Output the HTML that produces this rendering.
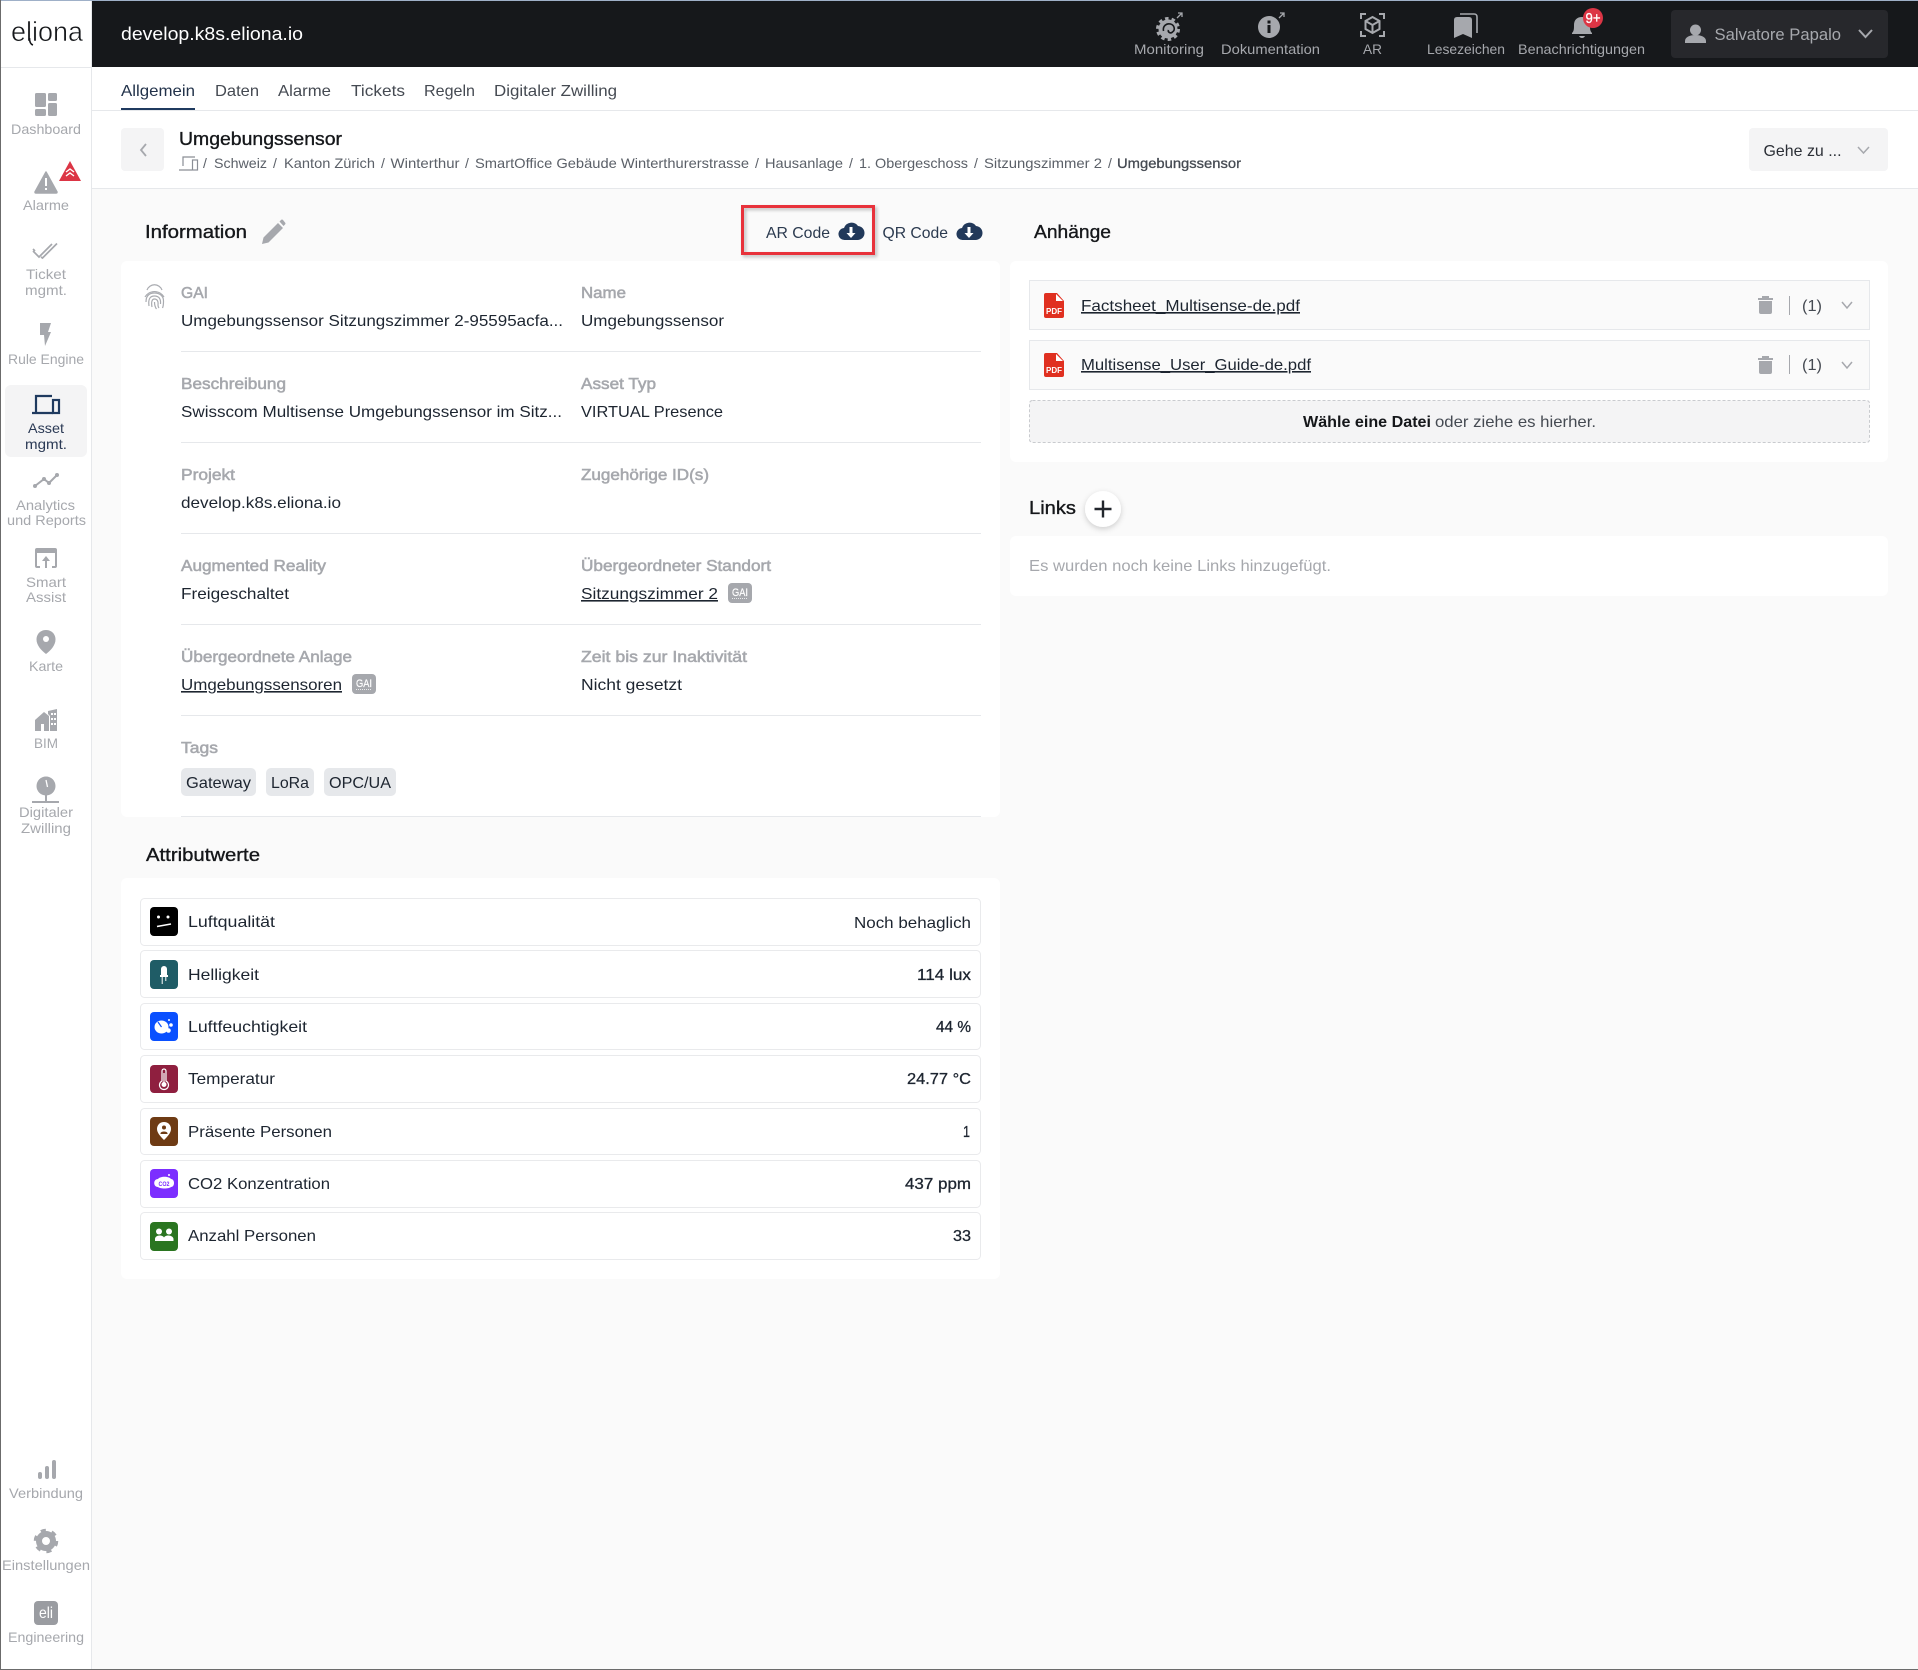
<!DOCTYPE html>
<html lang="de"><head><meta charset="utf-8"><title>Umgebungssensor</title>
<style>
html,body{margin:0;padding:0;width:1918px;height:1670px;overflow:hidden;background:#fafafa}
svg{display:block;position:absolute;left:0;top:0}
text{font-family:"Liberation Sans",Arial,sans-serif;font-size:16px;fill:#1d2530;white-space:pre}
.m{stroke:#1d2530;stroke-width:.3px}
.s text,text.s{font-size:14px;fill:#a6a8ad}
.h{font-size:18px;fill:#15171a;stroke:#15171a;stroke-width:.35px}
.l{fill:#a6a8ad;stroke:#a6a8ad;stroke-width:.55px}
.bc{font-size:14px;fill:#5b6068}
.t{fill:#454a52}
.ico{fill:#a6a8ad}
</style></head><body>
<svg width="1918" height="1670" viewBox="0 0 1918 1670" xmlns="http://www.w3.org/2000/svg">
<defs><filter id="sh" x="-40%" y="-40%" width="180%" height="190%"><feDropShadow dx="0" dy="2" stdDeviation="3" flood-color="#000" flood-opacity=".18"/></filter>
<filter id="sh2" x="-10%" y="-10%" width="125%" height="130%"><feDropShadow dx="2" dy="2" stdDeviation="1.5" flood-color="#000" flood-opacity=".25"/></filter></defs>
<rect width="1918" height="1670" fill="#fafafa"/>

<!-- sidebar -->
<rect x="0" y="0" width="92" height="1670" fill="#fff"/>
<rect x="91" y="0" width="1" height="1670" fill="#e6e8eb"/>
<rect x="0" y="67" width="92" height="1" fill="#e6e8eb"/>
<text x="11" y="41" textLength="72" lengthAdjust="spacingAndGlyphs" style="font-size:28px;fill:#15171a;stroke:#fff;stroke-width:.55px">eliona</text>
<path d="M29.500 38q0 6 3.500 7" fill="none" stroke="#15171a" stroke-width="1.600"/>

<!-- header -->
<rect x="92" y="0" width="1826" height="67" fill="#16181b"/>
<text x="121" y="40" textLength="182" lengthAdjust="spacingAndGlyphs" style="font-size:18px;fill:#fff">develop.k8s.eliona.io</text>

<g class="s">
<text x="1134" y="54" textLength="70" lengthAdjust="spacingAndGlyphs">Monitoring</text>
<text x="1221" y="54" textLength="99" lengthAdjust="spacingAndGlyphs">Dokumentation</text>
<text x="1363" y="54" textLength="19" lengthAdjust="spacingAndGlyphs">AR</text>
<text x="1427" y="54" textLength="78" lengthAdjust="spacingAndGlyphs">Lesezeichen</text>
<text x="1518" y="54" textLength="127" lengthAdjust="spacingAndGlyphs">Benachrichtigungen</text>
</g>
<!-- monitoring icon -->
<g>
<circle cx="1168" cy="29" r="9.500" fill="#a6a8ad"/>
<circle cx="1168" cy="29" r="10.500" fill="none" stroke="#a6a8ad" stroke-width="3" stroke-dasharray="3.500 3.100"/>
<path d="M1163.500 31c-1-5 3-8 7-7 4 1 5 6 2 8-2 2-5 0-4-2" fill="none" stroke="#16181b" stroke-width="1.600"/>
<path d="M1177 18l5-5m-4 0h4v4" fill="none" stroke="#a6a8ad" stroke-width="1.300"/>
</g>
<!-- info -->
<circle cx="1269" cy="27" r="11" fill="#a6a8ad"/>
<rect x="1267.500" y="25" width="3" height="8" fill="#16181b"/><rect x="1267.500" y="20.500" width="3" height="3" fill="#16181b"/>
<path d="M1279 18l5-5m-4 0h4v4" fill="none" stroke="#a6a8ad" stroke-width="1.300"/>
<!-- AR -->
<g fill="none" stroke="#a6a8ad" stroke-width="2">
<path d="M1361 19v-5h5M1379 14h5v5M1384 31v5h-5M1366 36h-5v-5"/>
<path d="M1372.500 17l7 4v8l-7 4-7-4v-8zM1365.500 21l7 4 7-4M1372.500 25v8"/>
</g>
<!-- bookmark -->
<path d="M1454 20q0-3 3-3h12q3 0 3 3v18l-9-4-9 4z" fill="#a6a8ad"/>
<path d="M1460 14h14q3 0 3 3v16" fill="none" stroke="#a6a8ad" stroke-width="1.600"/>
<!-- bell -->
<path d="M1572 33c2-2 2-4 2-8 0-5 3-8 8-8s8 3 8 8c0 4 0 6 2 8v1h-20z" fill="#a6a8ad"/><path d="M1579 36h6q-1 2-3 2t-3-2z" fill="#a6a8ad"/>
<circle cx="1593" cy="18" r="10" fill="#dc3545"/>
<text x="1585.500" y="23" textLength="15" lengthAdjust="spacingAndGlyphs" style="font-size:15px;fill:#fff;stroke:#fff;stroke-width:.3px">9+</text>
<!-- user -->
<rect x="1671" y="10" width="217" height="48" rx="4" fill="#27282c"/>
<circle cx="1695.500" cy="30" r="5.500" fill="#a6a8ad"/><path d="M1685 43v-2c0-4 5-6 10.500-6s10.500 2 10.500 6v2z" fill="#a6a8ad"/>
<text x="1714.500" y="40" textLength="126.500" lengthAdjust="spacingAndGlyphs" style="font-size:17px;fill:#a6a8ad">Salvatore Papalo</text>
<path d="M1859 30l6.500 7 6.500-7" fill="none" stroke="#a6a8ad" stroke-width="2"/>

<!-- tabs -->
<rect x="92" y="67" width="1826" height="121" fill="#fff"/>
<rect x="92" y="110" width="1826" height="1" fill="#e6e8eb"/>
<rect x="92" y="188" width="1826" height="1" fill="#e6e8eb"/>
<rect x="121" y="108" width="74" height="2" fill="#1f3a5f"/>
<g>
<text class="t" x="121" y="96" textLength="74" lengthAdjust="spacingAndGlyphs" style="fill:#22324a">Allgemein</text>
<text class="t" x="215" y="96" textLength="44" lengthAdjust="spacingAndGlyphs">Daten</text>
<text class="t" x="278" y="96" textLength="53" lengthAdjust="spacingAndGlyphs">Alarme</text>
<text class="t" x="351" y="96" textLength="54" lengthAdjust="spacingAndGlyphs">Tickets</text>
<text class="t" x="424" y="96" textLength="51" lengthAdjust="spacingAndGlyphs">Regeln</text>
<text class="t" x="494" y="96" textLength="123" lengthAdjust="spacingAndGlyphs">Digitaler Zwilling</text>
</g>

<!-- breadcrumb -->
<rect x="121" y="128" width="43" height="43" rx="4" fill="#f4f4f5"/>
<path d="M146 144l-5 6 5 6" fill="none" stroke="#a6a8ad" stroke-width="1.800"/>
<text class="h" x="179" y="145" textLength="163" lengthAdjust="spacingAndGlyphs">Umgebungssensor</text>
<g fill="none" stroke="#8a8e95" stroke-width="1.200"><path d="M183 166v-9h12M179 170h13"/><rect x="192.500" y="160" width="5" height="10"/></g>
<g class="bc">
<text class="bc" x="203" y="168">/</text>
<text class="bc" x="214" y="168" textLength="53" lengthAdjust="spacingAndGlyphs">Schweiz</text>
<text class="bc" x="273" y="168">/</text>
<text class="bc" x="284" y="168" textLength="91" lengthAdjust="spacingAndGlyphs">Kanton Zürich</text>
<text class="bc" x="381" y="168">/</text>
<text class="bc" x="390.500" y="168" textLength="69" lengthAdjust="spacingAndGlyphs">Winterthur</text>
<text class="bc" x="465" y="168">/</text>
<text class="bc" x="475" y="168" textLength="274" lengthAdjust="spacingAndGlyphs">SmartOffice Gebäude Winterthurerstrasse</text>
<text class="bc" x="755" y="168">/</text>
<text class="bc" x="765" y="168" textLength="78" lengthAdjust="spacingAndGlyphs">Hausanlage</text>
<text class="bc" x="849" y="168">/</text>
<text class="bc" x="859" y="168" textLength="109" lengthAdjust="spacingAndGlyphs">1. Obergeschoss</text>
<text class="bc" x="974" y="168">/</text>
<text class="bc" x="984" y="168" textLength="118" lengthAdjust="spacingAndGlyphs">Sitzungszimmer 2</text>
<text class="bc" x="1108" y="168">/</text>
<text class="bc" x="1117" y="168" textLength="124" lengthAdjust="spacingAndGlyphs" style="fill:#454a52;stroke:#454a52;stroke-width:.3px">Umgebungssensor</text>
</g>
<rect x="1749" y="128" width="139" height="43" rx="4" fill="#f4f4f5"/>
<text x="1763.500" y="156" textLength="78" lengthAdjust="spacingAndGlyphs" style="fill:#2b2f36">Gehe zu ...</text>
<path d="M1858 147l5.500 6 5.500-6" fill="none" stroke="#a6a8ad" stroke-width="1.500"/>

<!-- sidebar items -->
<rect x="5" y="385" width="82" height="72" rx="6" fill="#f4f4f5"/>
<g class="ico">
<rect x="35" y="93" width="11" height="14" rx="1.500"/><rect x="48" y="93" width="9" height="8" rx="1.500"/><rect x="35" y="109" width="11" height="7" rx="1.500"/><rect x="48" y="103" width="9" height="13" rx="1.500"/>
<path d="M46 172l11 20q0 1-1 1H36q-1 0-1-1z" stroke="#a6a8ad" stroke-width="1.500" stroke-linejoin="round"/>
<path d="M33 251l6 6 13-13M41 257l1.500 1L57 243.500" fill="none" stroke="#a6a8ad" stroke-width="1.700"/>
<path d="M33 249l2 2" fill="none" stroke="#a6a8ad" stroke-width="1.700"/>
<path d="M40 323h11l-3 9h3l-6 14-1-11h-4z"/>
<circle cx="35" cy="486" r="2"/><circle cx="44" cy="479" r="2"/><circle cx="49" cy="483" r="2"/><circle cx="57" cy="475" r="2"/>
<path d="M35 486l9-7 5 4 8-8" fill="none" stroke="#a6a8ad" stroke-width="2"/>
<path d="M37 548h18a2 2 0 0 1 2 2v16a2 2 0 0 1-2 2h-3v-2h3v-13H37v13h3v2h-3a2 2 0 0 1-2-2v-16a2 2 0 0 1 2-2zM46 556l4 5h-3v7h-2v-7h-3z"/>
<path d="M46 630c5.500 0 9.500 4 9.500 9.500 0 6-5 11-9.500 14.500-4.500-3.500-9.500-8.500-9.500-14.500C36.500 634 40.500 630 46 630z"/>
<path d="M35 720l9-8 5 4v15h-5v-7h-3v7h-6zM48 711l9-2v22h-7v-15l-2-2z"/>
<circle cx="46" cy="786" r="9.500"/>
<rect x="32" y="801" width="27" height="2"/><rect x="45" y="795" width="2" height="7"/>
<rect x="38" y="1472" width="4" height="7" rx="2"/><rect x="45" y="1466" width="4" height="13" rx="2"/><rect x="52" y="1460" width="4" height="19" rx="2"/>
<rect x="34" y="1601" width="24" height="24" rx="4" fill="#9a9ca1"/>
</g>
<circle cx="46" cy="639" r="3" fill="#fff"/>
<g fill="#fff"><rect x="51" y="713" width="2" height="2"/><rect x="54" y="713" width="2" height="2"/><rect x="51" y="718" width="2" height="2"/><rect x="54" y="718" width="2" height="2"/><rect x="51" y="723" width="2" height="2"/><rect x="54" y="723" width="2" height="2"/></g>
<rect x="45" y="178" width="2" height="8" fill="#fff"/><rect x="45" y="188" width="2" height="2" fill="#fff"/>
<path d="M46 780l1.500 7" stroke="#fff" stroke-width="1.300"/>
<path d="M70 161l11 20H59z" fill="#dc3545"/>
<path d="M66 172l4-3 4 3M66 176l4-3 4 3" stroke="#fff" stroke-width="1.400" fill="none"/>
<g stroke="#1f3a5f" fill="none" stroke-width="2.200"><path d="M36 412v-16h16M32 413h21"/><rect x="53" y="400" width="6" height="13"/></g>
<circle cx="46" cy="1541" r="7" fill="none" stroke="#a6a8ad" stroke-width="6"/>
<circle cx="46" cy="1541" r="10.500" fill="none" stroke="#a6a8ad" stroke-width="3.500" stroke-dasharray="5 6"/>
<text x="39" y="1618" textLength="14" lengthAdjust="spacingAndGlyphs" style="font-size:16px;fill:#fff">eli</text>
<g class="s">
<text x="11" y="134" textLength="70" lengthAdjust="spacingAndGlyphs">Dashboard</text>
<text x="23" y="210" textLength="46" lengthAdjust="spacingAndGlyphs">Alarme</text>
<text x="26" y="279" textLength="40" lengthAdjust="spacingAndGlyphs">Ticket</text>
<text x="25" y="295" textLength="42" lengthAdjust="spacingAndGlyphs">mgmt.</text>
<text x="8" y="364" textLength="76" lengthAdjust="spacingAndGlyphs">Rule Engine</text>
<text x="28" y="433" textLength="36" lengthAdjust="spacingAndGlyphs" style="fill:#2b3a55">Asset</text>
<text x="25" y="449" textLength="42" lengthAdjust="spacingAndGlyphs" style="fill:#2b3a55">mgmt.</text>
<text x="16" y="510" textLength="59" lengthAdjust="spacingAndGlyphs">Analytics</text>
<text x="7" y="525" textLength="79" lengthAdjust="spacingAndGlyphs">und Reports</text>
<text x="26" y="587" textLength="40" lengthAdjust="spacingAndGlyphs">Smart</text>
<text x="26" y="602" textLength="40" lengthAdjust="spacingAndGlyphs">Assist</text>
<text x="29" y="671" textLength="34" lengthAdjust="spacingAndGlyphs">Karte</text>
<text x="34" y="748" textLength="24" lengthAdjust="spacingAndGlyphs">BIM</text>
<text x="19" y="817" textLength="54" lengthAdjust="spacingAndGlyphs">Digitaler</text>
<text x="21" y="833" textLength="50" lengthAdjust="spacingAndGlyphs">Zwilling</text>
<text x="9" y="1498" textLength="74" lengthAdjust="spacingAndGlyphs">Verbindung</text>
<text x="2" y="1570" textLength="88" lengthAdjust="spacingAndGlyphs">Einstellungen</text>
<text x="8" y="1642" textLength="76" lengthAdjust="spacingAndGlyphs">Engineering</text>
</g>

<!-- information heading -->
<text class="h" x="145" y="238" textLength="102" lengthAdjust="spacingAndGlyphs">Information</text>
<path d="M262 244l1.500-6.500L278 223l5 5-14.500 14.500zM279.500 221.500l1.500-1.500q1-1 2 0l2 2.500q1 1 0 2l-1.500 1.500z" fill="#a6a8ad"/>
<text x="766" y="238" textLength="64" lengthAdjust="spacingAndGlyphs" style="fill:#2b3a4f">AR Code</text>
<path d="M845 240a6 6 0 0 1-1-12 8 8 0 0 1 14-2 7 7 0 0 1-1 14z" fill="#22395a"/><path d="M849.500 227h3v6h3l-4.500 5-4.500-5h3z" fill="#fff"/>
<text x="882.500" y="238" textLength="65.500" lengthAdjust="spacingAndGlyphs" style="fill:#2b3a4f">QR Code</text>
<path d="M963 240a6 6 0 0 1-1-12 8 8 0 0 1 14-2 7 7 0 0 1-1 14z" fill="#22395a"/><path d="M967.500 227h3v6h3l-4.500 5-4.500-5h3z" fill="#fff"/>

<!-- info card -->
<rect x="121" y="261" width="879" height="556" rx="6" fill="#fff"/>
<rect x="742.500" y="206.500" width="131" height="47" fill="none" stroke="#e8303a" stroke-width="3" filter="url(#sh2)"/>
<g fill="none" stroke="#a9abb0" stroke-width="1.200"><path d="M147 290a8 8 0 0 1 15 0M145 297a11 11 0 0 1 19 0"/><path d="M146 302c0-6 3-9 8.500-9s9 3 9 8c0 3 0 5-1 7"/><path d="M149 306c-1-7 1-10 5.500-10s6.500 3 6 8"/><path d="M152 307c-1-5 0-8 2.500-8s4 2 3.500 6c0 2 1 3 1 3"/><path d="M154.500 302c0 3 .5 5 2 7"/></g>

<g>
<text class="l" x="181" y="298" textLength="27" lengthAdjust="spacingAndGlyphs">GAI</text>
<text class="l" x="581" y="298" textLength="45" lengthAdjust="spacingAndGlyphs">Name</text>
<text x="181" y="326" textLength="382" lengthAdjust="spacingAndGlyphs">Umgebungssensor Sitzungszimmer 2-95595acfa...</text>
<text x="581" y="326" textLength="143" lengthAdjust="spacingAndGlyphs">Umgebungssensor</text>
<text class="l" x="181" y="389" textLength="105" lengthAdjust="spacingAndGlyphs">Beschreibung</text>
<text class="l" x="581" y="389" textLength="75" lengthAdjust="spacingAndGlyphs">Asset Typ</text>
<text x="181" y="417" textLength="381" lengthAdjust="spacingAndGlyphs">Swisscom Multisense Umgebungssensor im Sitz...</text>
<text x="581" y="417" textLength="142" lengthAdjust="spacingAndGlyphs">VIRTUAL Presence</text>
<text class="l" x="181" y="480" textLength="54" lengthAdjust="spacingAndGlyphs">Projekt</text>
<text class="l" x="581" y="480" textLength="128" lengthAdjust="spacingAndGlyphs">Zugehörige ID(s)</text>
<text x="181" y="508" textLength="160" lengthAdjust="spacingAndGlyphs">develop.k8s.eliona.io</text>
<text class="l" x="181" y="571" textLength="145" lengthAdjust="spacingAndGlyphs">Augmented Reality</text>
<text class="l" x="581" y="571" textLength="190" lengthAdjust="spacingAndGlyphs">Übergeordneter Standort</text>
<text x="181" y="599" textLength="108" lengthAdjust="spacingAndGlyphs">Freigeschaltet</text>
<text x="581" y="599" textLength="137" lengthAdjust="spacingAndGlyphs" text-decoration="underline">Sitzungszimmer 2</text>
<text class="l" x="181" y="662" textLength="171" lengthAdjust="spacingAndGlyphs">Übergeordnete Anlage</text>
<text class="l" x="581" y="662" textLength="166" lengthAdjust="spacingAndGlyphs">Zeit bis zur Inaktivität</text>
<text x="181" y="690" textLength="161" lengthAdjust="spacingAndGlyphs" text-decoration="underline">Umgebungssensoren</text>
<text x="581" y="690" textLength="101" lengthAdjust="spacingAndGlyphs">Nicht gesetzt</text>
<text class="l" x="181" y="753" textLength="37" lengthAdjust="spacingAndGlyphs">Tags</text>
</g>
<g fill="#e6e8eb">
<rect x="181" y="351" width="800" height="1"/><rect x="181" y="442" width="800" height="1"/><rect x="181" y="533" width="800" height="1"/><rect x="181" y="624" width="800" height="1"/><rect x="181" y="715" width="800" height="1"/><rect x="181" y="816" width="800" height="1"/>
<rect x="181" y="768" width="75" height="28" rx="5"/><rect x="266" y="768" width="48" height="28" rx="5"/><rect x="324" y="768" width="72" height="28" rx="5"/>
</g>
<text x="186" y="788" textLength="65" lengthAdjust="spacingAndGlyphs">Gateway</text>
<text x="271" y="788" textLength="38" lengthAdjust="spacingAndGlyphs">LoRa</text>
<text x="329" y="788" textLength="62" lengthAdjust="spacingAndGlyphs">OPC/UA</text>
<g fill="#a6a8ad"><rect x="352" y="674" width="24" height="20" rx="4"/><rect x="728" y="583" width="24" height="20" rx="4"/></g>
<text x="356" y="687" textLength="16" lengthAdjust="spacingAndGlyphs" style="font-size:11px;fill:#fff;stroke:#fff;stroke-width:.2px">GAI</text>
<text x="732" y="596" textLength="16" lengthAdjust="spacingAndGlyphs" style="font-size:11px;fill:#fff;stroke:#fff;stroke-width:.2px">GAI</text>
<path d="M356 689.500h16M732 598.500h16" stroke="#fff" stroke-width=".8" stroke-dasharray="1 1"/>

<!-- attributes -->
<text class="h" x="146" y="861" textLength="114" lengthAdjust="spacingAndGlyphs">Attributwerte</text>
<rect x="121" y="878" width="879" height="401" rx="6" fill="#fff"/>
<g fill="#fff" stroke="#e9eaec">
<rect x="140.500" y="898.500" width="840" height="47" rx="4"/>
<rect x="140.500" y="950.500" width="840" height="47" rx="4"/>
<rect x="140.500" y="1003.500" width="840" height="46" rx="4"/>
<rect x="140.500" y="1055.500" width="840" height="47" rx="4"/>
<rect x="140.500" y="1108.500" width="840" height="46" rx="4"/>
<rect x="140.500" y="1160.500" width="840" height="47" rx="4"/>
<rect x="140.500" y="1212.500" width="840" height="47" rx="4"/>
</g>
<rect x="150" y="907" width="28" height="29" rx="4" fill="#000"/>
<rect x="150" y="960" width="28" height="29" rx="4" fill="#1f5c66"/>
<rect x="150" y="1012" width="28" height="29" rx="4" fill="#0a50ff"/>
<rect x="150" y="1065" width="28" height="28" rx="4" fill="#8f1f3f"/>
<rect x="150" y="1117" width="28" height="29" rx="4" fill="#6e3b14"/>
<rect x="150" y="1169" width="28" height="29" rx="4" fill="#7c2eff"/>
<rect x="150" y="1222" width="28" height="29" rx="4" fill="#2a7520"/>
<!-- attr glyphs -->
<g fill="#fff">
<circle cx="158.500" cy="917" r="1.500"/><circle cx="168" cy="917" r="1.500"/><path d="M157 926.500l14-2.500" stroke="#fff" stroke-width="1.500"/>
<path d="M161 975v-6a3 3 0 0 1 6 0v6h1v2h-8v-2z"/><rect x="161.700" y="977" width="1" height="7"/><rect x="165.300" y="977" width="1" height="4"/>
<ellipse cx="161.500" cy="1027" rx="7" ry="6.500"/><circle cx="171" cy="1025" r="1.800"/><circle cx="168.500" cy="1030.500" r="2.300"/><circle cx="169" cy="1020" r="1"/>
<path d="M158 1022l3.500 5" stroke="#0a50ff" stroke-width="1.200"/>
<path d="M162 1071a2 2 0 0 1 4 0v10a4.500 4.500 0 1 1-4 0z" fill="none" stroke="#fff" stroke-width="1.200"/><circle cx="164" cy="1084.500" r="2.500"/><rect x="163.400" y="1073" width="1.200" height="10"/>
<path d="M164 1122c4 0 7 3 7 7 0 4-4 8-7 11-3-3-7-7-7-11 0-4 3-7 7-7z"/>
<circle cx="164" cy="1127.500" r="2" fill="#6e3b14"/><path d="M160.500 1133c1-2 6-2 7 0v1h-7z" fill="#6e3b14"/>
<path d="M158 1179c2-3 11-3 13 0 4 0 4 8 0 8-2 2-11 2-13 0-5 0-5-8 0-8z"/><circle cx="169" cy="1175" r="1"/>
<circle cx="159" cy="1231.500" r="3"/><circle cx="169" cy="1231.500" r="3"/><path d="M155 1241v-2c0-2 2-3.500 4.500-3.500s4 1 4.500 2c.5-1 2-2 4.500-2s5 1.500 5 3.500v2z"/>
</g>
<text x="158.500" y="1186" textLength="11" lengthAdjust="spacingAndGlyphs" style="font-size:6.500px;fill:#7c2eff;font-weight:bold">CO2</text>
<g>
<text x="188" y="927" textLength="87" lengthAdjust="spacingAndGlyphs">Luftqualität</text>
<text x="188" y="980" textLength="71" lengthAdjust="spacingAndGlyphs">Helligkeit</text>
<text x="188" y="1032" textLength="119" lengthAdjust="spacingAndGlyphs">Luftfeuchtigkeit</text>
<text x="188" y="1084" textLength="87" lengthAdjust="spacingAndGlyphs">Temperatur</text>
<text x="188" y="1137" textLength="144" lengthAdjust="spacingAndGlyphs">Präsente Personen</text>
<text x="188" y="1189" textLength="142" lengthAdjust="spacingAndGlyphs">CO2 Konzentration</text>
<text x="188" y="1241" textLength="128" lengthAdjust="spacingAndGlyphs">Anzahl Personen</text>
<text x="854" y="928" textLength="117" lengthAdjust="spacingAndGlyphs">Noch behaglich</text>
<text class="m" x="917" y="980" textLength="54" lengthAdjust="spacingAndGlyphs">114 lux</text>
<text class="m" x="936" y="1032" textLength="35" lengthAdjust="spacingAndGlyphs">44 %</text>
<text class="m" x="907" y="1084" textLength="64" lengthAdjust="spacingAndGlyphs">24.77 °C</text>
<text class="m" x="963" y="1137" textLength="7" lengthAdjust="spacingAndGlyphs">1</text>
<text class="m" x="905" y="1189" textLength="66" lengthAdjust="spacingAndGlyphs">437 ppm</text>
<text class="m" x="953" y="1241" textLength="18" lengthAdjust="spacingAndGlyphs">33</text>
</g>

<!-- attachments -->
<text class="h" x="1034" y="238" textLength="77" lengthAdjust="spacingAndGlyphs">Anhänge</text>
<rect x="1010" y="261" width="878" height="201" rx="6" fill="#fff"/>
<rect x="1029.500" y="280.500" width="840" height="49" fill="#fafafa" stroke="#e6e8eb"/>
<rect x="1029.500" y="340.500" width="840" height="49" fill="#fafafa" stroke="#e6e8eb"/>
<rect x="1029.500" y="400.500" width="840" height="42" rx="3" fill="#f4f4f5" stroke="#c9cbcf" stroke-dasharray="3 2"/>
<g fill="#e03020">
<path d="M1046 293h11l7 8v15q0 2-2 2h-16q-2 0-2-2v-21q0-2 2-2z"/>
<path d="M1046 353h11l7 8v14q0 2-2 2h-16q-2 0-2-2v-20q0-2 2-2z"/>
</g>
<path d="M1056 294v7h7zM1056 354v7h7z" fill="#fff"/>
<text x="1046" y="314" textLength="16" lengthAdjust="spacingAndGlyphs" style="font-size:8px;font-weight:bold;fill:#fff">PDF</text>
<text x="1046" y="373" textLength="16" lengthAdjust="spacingAndGlyphs" style="font-size:8px;font-weight:bold;fill:#fff">PDF</text>
<text x="1081" y="311" textLength="219" lengthAdjust="spacingAndGlyphs" text-decoration="underline">Factsheet_Multisense-de.pdf</text>
<text x="1081" y="370" textLength="230" lengthAdjust="spacingAndGlyphs" text-decoration="underline">Multisense_User_Guide-de.pdf</text>
<g fill="#a6a8ad">
<rect x="1758" y="298" width="15" height="2"/><rect x="1762" y="296" width="7" height="2"/><path d="M1759 301h13v11q0 2-2 2h-9q-2 0-2-2z"/>
<rect x="1758" y="358" width="15" height="2"/><rect x="1762" y="356" width="7" height="2"/><path d="M1759 361h13v11q0 2-2 2h-9q-2 0-2-2z"/>
<rect x="1789" y="296" width="1" height="19"/><rect x="1789" y="355" width="1" height="19"/>
</g>
<text x="1802" y="311" textLength="20" lengthAdjust="spacingAndGlyphs" style="fill:#454a52">(1)</text>
<text x="1802" y="370" textLength="20" lengthAdjust="spacingAndGlyphs" style="fill:#454a52">(1)</text>
<path d="M1842 302l5 6 5-6M1842 362l5 6 5-6" fill="none" stroke="#a6a8ad" stroke-width="1.500"/>
<text x="1303" y="427" textLength="128" lengthAdjust="spacingAndGlyphs" style="font-weight:bold;fill:#15171a">Wähle eine Datei</text>
<text x="1435" y="427" textLength="161" lengthAdjust="spacingAndGlyphs" style="fill:#454a52">oder ziehe es hierher.</text>

<!-- links -->
<text class="h" x="1029" y="514" textLength="47" lengthAdjust="spacingAndGlyphs">Links</text>
<circle cx="1103" cy="509" r="18" fill="#fff" filter="url(#sh)"/>
<path d="M1103 500.500v17M1094.500 509h17" stroke="#22262c" stroke-width="2.400"/>
<rect x="1010" y="536" width="878" height="60" rx="6" fill="#fff"/>
<text x="1029" y="571" textLength="302" lengthAdjust="spacingAndGlyphs" style="fill:#a6a8ad">Es wurden noch keine Links hinzugefügt.</text>

<!-- window borders -->
<rect x="0" y="0" width="1918" height="1" fill="#9fb0c8"/>
<rect x="0" y="0" width="1" height="1670" fill="#6b6b6b"/>
<rect x="0" y="1669" width="1918" height="1" fill="#6b6b6b"/>
</svg>
</body></html>
